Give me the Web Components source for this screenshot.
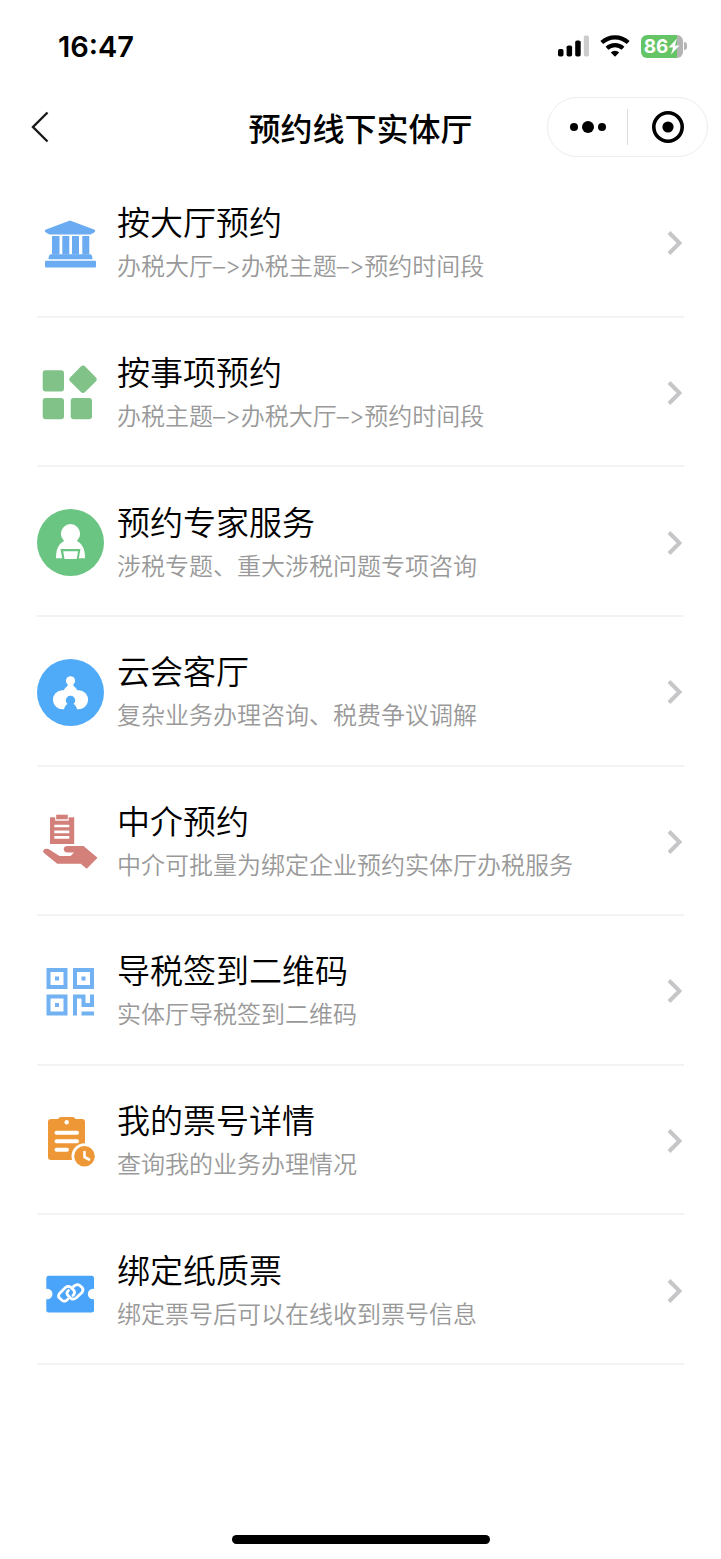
<!DOCTYPE html>
<html lang="zh-CN">
<head>
<meta charset="utf-8">
<meta name="viewport" content="width=device-width, initial-scale=1">
<title>预约线下实体厅</title>
<style>
  body {
    margin: 0;
    background: #fff;
    color: #000;
    font-family: Inter, "Noto Sans CJK SC", sans-serif;
  }
</style>
</head>
<body>
<booking-page>
  <status-bar slot="top" time="16:47" battery="86"></status-bar>
  <nav-header slot="top">预约线下实体厅</nav-header>

  <menu-item href="#hall">
    <svg slot="icon" viewBox="0 0 67 67" fill="#6aabf2">
      <path d="M33 10.500L57 19.500Q59.500 21 57 22.500L53.500 24.500H12.500L9 22.500Q6.500 21 9 19.500Z"/>
      <path d="M15 26h7.500v18.500H15zM25.300 26h7v18.500h-7zM35 26h7v18.500h-7zM45.300 26h7v18.500h-7z"/>
      <path d="M13.500 44.200h40q2 1 2 5h-44q0-4 2-5z"/>
      <rect x="8" y="50.800" width="51" height="6.700" rx="1"/>
    </svg>
    按大厅预约
    <span slot="note">办税大厅–&gt;办税主题–&gt;预约时间段</span>
  </menu-item>

  <menu-item href="#matter">
    <svg slot="icon" viewBox="0 0 67 67" fill="#80c288">
      <rect x="5.700" y="11.300" width="21.300" height="21.300" rx="3"/>
      <rect x="5.700" y="39" width="21.300" height="21.300" rx="3"/>
      <rect x="33.700" y="39" width="21.300" height="21.300" rx="3"/>
      <rect x="35.500" y="9.800" width="21" height="21" rx="3" transform="rotate(45 46 20.300)"/>
    </svg>
    按事项预约
    <span slot="note">办税主题–&gt;办税大厅–&gt;预约时间段</span>
  </menu-item>

  <menu-item href="#expert">
    <svg slot="icon" viewBox="0 0 67 67">
      <circle cx="33.500" cy="33.500" r="33.500" fill="#6ac482"/>
      <circle cx="33.500" cy="24.700" r="9.600" fill="#fff"/>
      <path d="M28 31.500H39C45 34.500 48 39 48 49.300H19C19 39 22 34.500 28 31.500Z" fill="#fff"/>
      <path d="M23.500 40H43.500L41.500 51H25.500Z" fill="#6ac482"/>
      <path d="M26.200 42.300H41L39.700 50H27.500Z" fill="#fff"/>
    </svg>
    预约专家服务
    <span slot="note">涉税专题、重大涉税问题专项咨询</span>
  </menu-item>

  <menu-item href="#cloud">
    <svg slot="icon" viewBox="0 0 67 67">
      <circle cx="33.500" cy="33.500" r="33.500" fill="#4fabf7"/>
      <g fill="#fff">
        <circle cx="33.500" cy="21.800" r="4.600"/>
        <path d="M31 24H36L36.500 27Q40 29 40.500 33V42H26.500V33Q27 29 30.500 27Z"/>
        <path d="M24.700 31.200H42.300A9.500 9.500 0 0 1 40.800 50.200H26.200A9.500 9.500 0 0 1 24.700 31.200Z"/>
      </g>
      <path d="M30.500 45A4.700 4.700 0 1 1 36.500 45Q39 46 40.300 51H26.700Q28 46 30.500 45Z" fill="#4fabf7"/>
    </svg>
    云会客厅
    <span slot="note">复杂业务办理咨询、税费争议调解</span>
  </menu-item>

  <menu-item href="#agent">
    <svg slot="icon" viewBox="0 0 67 67" fill="#d37f7a">
      <path d="M13 9.300H37.200V36H13Z"/>
      <rect x="18.200" y="6" width="13.500" height="6.700" fill="#fff"/>
      <rect x="19.200" y="6.700" width="11.600" height="4.600"/>
      <path d="M17.300 16.700h15v2.600h-15zM17.300 22.400h15v2.800h-15zM17.300 28h15v2.800h-15z" fill="#fff"/>
      <path d="M6.200 42.500Q7.500 40 11.500 41L22.500 48H33.500L37 44.600H30.500Q26.700 44 26.700 41Q27 38 30.500 38H46.500L60.500 49.700L49.700 60.800L43.700 55.700H20.300L7 45Q6 44 6.200 42.500Z"/>
    </svg>
    中介预约
    <span slot="note">中介可批量为绑定企业预约实体厅办税服务</span>
  </menu-item>

  <menu-item href="#qrcode">
    <svg slot="icon" viewBox="0 0 67 67" fill="#73b2f2">
      <g fill="none" stroke="#73b2f2" stroke-width="4">
        <path d="M11.500 12H28.500V29H11.500ZM38 12H55V29H38ZM11.500 38.500H28.500V55.500H11.500Z"/>
        <path d="M38 57.500V38.500H46.500V47H55V36.500"/>
        <path d="M44.500 55.500H57"/>
      </g>
      <path d="M18 18.500h4v4h-4zM44.500 18.500h4v4h-4zM18 45h4v4h-4z"/>
    </svg>
    导税签到二维码
    <span slot="note">实体厅导税签到二维码</span>
  </menu-item>

  <menu-item href="#ticket">
    <svg slot="icon" viewBox="0 0 67 67" fill="#ee9737">
      <path d="M14 11H21Q22 9 24 9H35.500Q37.500 9 38.500 11H45Q48 11 48 14V52H14Q11 52 11 49V14Q11 11 14 11Z"/>
      <circle cx="29.700" cy="14.300" r="2.200" fill="#fff"/>
      <path d="M19.500 24.700H40M19.500 33.200H40M19.500 41.700H30" stroke="#fff" stroke-width="4" stroke-linecap="round"/>
      <circle cx="47.500" cy="48.200" r="13" fill="#fff"/>
      <circle cx="47.500" cy="48.200" r="10.300"/>
      <path d="M47.500 44V49L52 51.500" fill="none" stroke="#fff" stroke-width="2.600" stroke-linecap="round" stroke-linejoin="round"/>
    </svg>
    我的票号详情
    <span slot="note">查询我的业务办理情况</span>
  </menu-item>

  <menu-item href="#bind">
    <svg slot="icon" viewBox="0 0 67 67">
      <rect x="9.300" y="18.800" width="47.700" height="36.700" rx="2.500" fill="#4aa4fa"/>
      <circle cx="10.300" cy="37" r="5.200" fill="#fff"/>
      <circle cx="56" cy="37" r="5.200" fill="#fff"/>
      <g fill="none" stroke="#fff" stroke-width="2.800" stroke-linecap="round" stroke-linejoin="round">
        <path d="M31 42L29 43.700Q27 44.600 25 43.300L22.500 41Q20.500 39 22.500 36.500L28.500 30.500Q31 28.500 33.500 30L37 33.500Q38.500 36 36 38.500"/>
        <path d="M36.500 29.500L38.500 28.200Q40.500 27.200 42.500 28.200L45 30.500Q47 32.500 45 35.500L39 41Q36.500 43 34 41.500L30.500 38Q29 35.500 31.500 33.500"/>
      </g>
    </svg>
    绑定纸质票
    <span slot="note">绑定票号后可以在线收到票号信息</span>
  </menu-item>
</booking-page>

<script>
const pageTemplate = document.createElement("template");
pageTemplate.innerHTML = `
    <style>
        :host {
            display: flex;
            flex-direction: column;
            min-height: 100vh;
        }
        main {
            flex: 1;
            display: grid;
            grid-auto-rows: 1fr;
            padding: 6px 37px 0;
        }
        footer {
            display: flex;
            align-items: flex-end;
            justify-content: center;
            height: 194px;
            padding-bottom: 15px;
            box-sizing: border-box;
        }
        .home {
            width: 258px;
            height: 9px;
            border-radius: 5px;
            background: #000;
        }
    </style>
    <slot name="top"></slot>
    <main><slot></slot></main>
    <footer><div class="home"></div></footer>
`;

class BookingPage extends HTMLElement {
  constructor() {
    super();
    this.attachShadow({ mode: "open" });
    this.shadowRoot.appendChild(pageTemplate.content.cloneNode(true));
  }
}

const statusTemplate = document.createElement("template");
statusTemplate.innerHTML = `
    <style>
        :host {
            display: flex;
            align-items: center;
            justify-content: space-between;
            height: 92px;
            padding: 0 34px 0 58px;
            font-weight: 600;
        }
        .time {
            font-size: 29px;
        }
        .icons {
            display: flex;
            align-items: center;
            gap: 11px;
        }
        svg {
            display: block;
            flex: none;
        }
        .battery {
            display: flex;
            align-items: center;
            gap: 1px;
        }
        .level {
            display: flex;
            align-items: center;
            justify-content: center;
            width: 42px;
            height: 23px;
            border-radius: 6px;
            background: linear-gradient(to right, #65c466 86%, #b4b4b4 86%);
            color: #fff;
            font-size: 19px;
            font-weight: 700;
            line-height: 23px;
        }
        .cap {
            width: 3px;
            height: 8px;
            border-radius: 0 3px 3px 0;
            background: #b4b4b4;
        }
    </style>
    <span class="time"></span>
    <div class="icons">
        <svg width="31" height="22" viewBox="0 0 31 22">
            <rect y="14" width="5.500" height="7.500" rx="1.800"/>
            <rect x="8.600" y="10.500" width="5.500" height="11" rx="1.800"/>
            <rect x="17.200" y="5.500" width="5.500" height="16" rx="1.800"/>
            <rect x="25.800" y="0.500" width="5.200" height="21" rx="1.800" fill="#ccc"/>
        </svg>
        <svg width="30" height="22" viewBox="0 0 30 22">
            <path d="M1.800 7.600A19.200 19.200 0 0 1 28.200 7.600M7 13.200A11.800 11.800 0 0 1 23 13.200" fill="none" stroke="#000" stroke-width="4.200"/>
            <path d="M10.800 17.400A6.200 6.200 0 0 1 19.200 17.400L15 21.800Z"/>
        </svg>
        <div class="battery">
            <div class="level"><span></span>
                <svg width="12" height="17" viewBox="0 0 12 17"><path d="M9 0.500L0.500 9.500H5L3 16.500L11.500 7.500H7Z" fill="#fff"/></svg>
            </div>
            <div class="cap"></div>
        </div>
    </div>
`;

class StatusBar extends HTMLElement {
  constructor() {
    super();
    this.attachShadow({ mode: "open" });
    this.shadowRoot.appendChild(statusTemplate.content.cloneNode(true));
  }

  connectedCallback() {
    this.shadowRoot.querySelector(".time").textContent = this.getAttribute("time");
    this.shadowRoot.querySelector(".level span").textContent = this.getAttribute("battery");
  }
}

const headerTemplate = document.createElement("template");
headerTemplate.innerHTML = `
    <style>
        :host {
            display: grid;
            grid-template-columns: 1fr auto 1fr;
            align-items: center;
            height: 70px;
            padding: 0 13px;
        }
        h1 {
            margin: 0;
            font-family: "Noto Sans CJK SC", sans-serif;
            font-size: 32px;
            font-weight: 500;
            line-height: 48px;
        }
        button {
            display: flex;
            align-items: center;
            justify-content: center;
            padding: 0;
            border: 0;
            background: none;
            cursor: pointer;
        }
        .back {
            justify-self: start;
            width: 54px;
            height: 48px;
        }
        .capsule {
            justify-self: end;
            display: flex;
            align-items: center;
            box-sizing: border-box;
            width: 161px;
            height: 60px;
            border: 1px solid #ededed;
            border-radius: 30px;
        }
        .capsule button {
            flex: 1;
            height: 36px;
        }
        .capsule button + button {
            border-left: 1px solid #dcdcdc;
        }
    </style>
    <button class="back" aria-label="返回">
        <svg width="18" height="32" viewBox="0 0 18 32"><path d="M16.500 1.500L2 16L16.500 30.500" fill="none" stroke="#1a1a1a" stroke-width="2.400"/></svg>
    </button>
    <h1><slot></slot></h1>
    <div class="capsule">
        <button aria-label="更多">
            <svg width="36" height="12" viewBox="0 0 36 12"><circle cx="4" cy="6" r="4"/><circle cx="18" cy="6" r="6"/><circle cx="32" cy="6" r="4"/></svg>
        </button>
        <button aria-label="关闭">
            <svg width="32" height="32" viewBox="0 0 32 32"><circle cx="16" cy="16" r="14.200" fill="none" stroke="#000" stroke-width="3.600"/><circle cx="16" cy="16" r="5.600"/></svg>
        </button>
    </div>
`;

class NavHeader extends HTMLElement {
  constructor() {
    super();
    this.attachShadow({ mode: "open" });
    this.shadowRoot.appendChild(headerTemplate.content.cloneNode(true));
  }
}

const itemTemplate = document.createElement("template");
itemTemplate.innerHTML = `
    <style>
        :host {
            display: flex;
            border-bottom: 2px solid #f3f3f3;
        }
        a {
            flex: 1;
            display: flex;
            align-items: center;
            gap: 13px;
            min-width: 0;
            padding-top: 3px;
            color: inherit;
            text-decoration: none;
        }
        ::slotted(svg) {
            display: block;
            flex: none;
            width: 67px;
            height: 67px;
        }
        .text {
            flex: 1;
            min-width: 0;
            font-family: Inter, "Noto Sans CJK SC DemiLight", "Noto Sans CJK SC", sans-serif;
            font-weight: 350;
        }
        .title {
            font-size: 33px;
            line-height: 48px;
        }
        /* keeps the dash and ">" apart instead of Inter's arrow */
        .note {
            color: #999;
            font-size: 24px;
            line-height: 40px;
            font-feature-settings: "calt" 0;
        }
        .arrow {
            flex: none;
            margin-right: 1px;
        }
    </style>
    <a>
        <slot name="icon"></slot>
        <div class="text">
            <div class="title"><slot></slot></div>
            <div class="note"><slot name="note"></slot></div>
        </div>
        <svg class="arrow" width="16" height="24" viewBox="0 0 16 24"><path d="M2 1.500L12.500 12L2 22.500" fill="none" stroke="#c6c6c8" stroke-width="4"/></svg>
    </a>
`;

class MenuItem extends HTMLElement {
  constructor() {
    super();
    this.attachShadow({ mode: "open" });
    this.shadowRoot.appendChild(itemTemplate.content.cloneNode(true));
  }

  connectedCallback() {
    this.shadowRoot.querySelector("a").href = this.getAttribute("href");
  }
}

customElements.define("booking-page", BookingPage);
customElements.define("status-bar", StatusBar);
customElements.define("nav-header", NavHeader);
customElements.define("menu-item", MenuItem);
</script>
</body>
</html>
